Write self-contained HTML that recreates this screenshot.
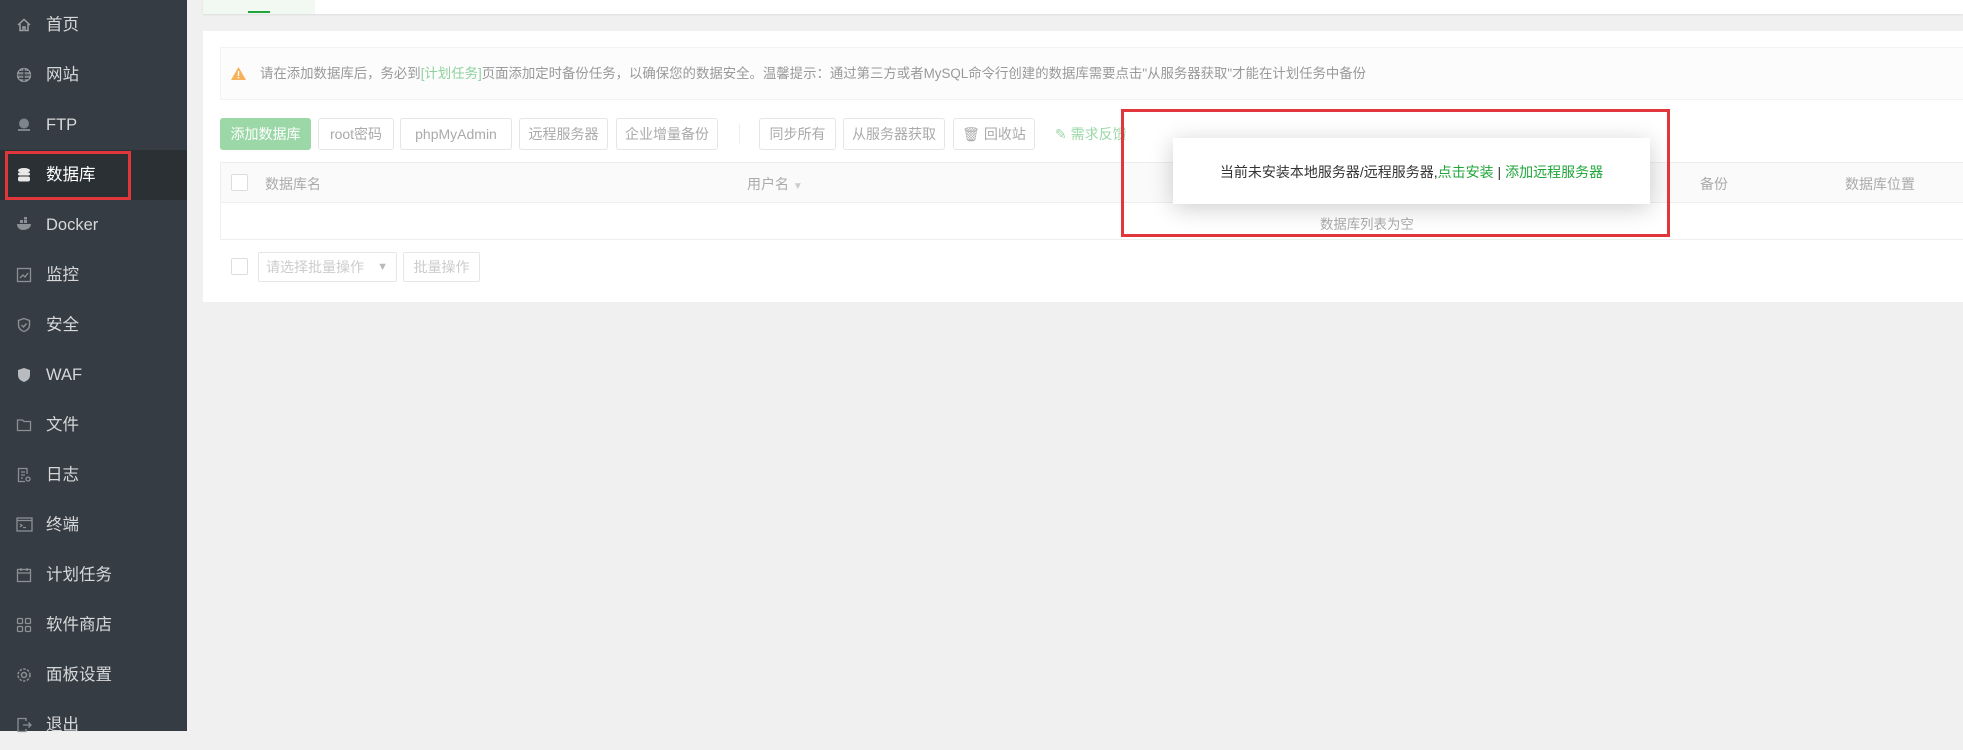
<!DOCTYPE html>
<html><head><meta charset="utf-8"><style>
*{margin:0;padding:0;box-sizing:border-box}
body{width:1963px;height:731px;overflow:hidden;background:#f0f0f0;font-family:"Liberation Sans","Noto Sans CJK SC",sans-serif;position:relative}
.side{position:absolute;left:0;top:0;width:187px;height:731px;background:#363c43}
.mi{position:absolute;left:0;width:187px;height:50px;color:#d6d8da;font-size:16.5px;line-height:50px}
.mi .t{position:absolute;left:46px}
.mi svg{position:absolute;left:16px;top:17px}
.act{background:#2b3035;color:#fff}
.abs{position:absolute}
.btn{position:absolute;top:118px;height:32px;border:1px solid #e6e6e6;border-radius:3px;background:#fff;color:#aaa;font-size:14px;line-height:30px;text-align:center}
</style></head><body>
<div class="side">
<div class="mi" style="top:0"><svg width="16" height="16" viewBox="0 0 16 16" fill="none" stroke="#9aa0a6" stroke-width="1.5"><path d="M2 8L8 2.5 14 8M4 7v6.5h3V10h2v3.5h3V7"/></svg><span class="t">首页</span></div>
<div class="mi" style="top:50px"><svg width="16" height="16" viewBox="0 0 16 16" fill="none" stroke="#9aa0a6" stroke-width="1.3"><circle cx="8" cy="8" r="6.5" fill="#7d848b"/><path d="M1.5 8h13M8 1.5v13M3 4.5h10M3 11.5h10" stroke="#363c43"/></svg><span class="t">网站</span></div>
<div class="mi" style="top:100px"><svg width="16" height="16" viewBox="0 0 16 16"><circle cx="8" cy="6.5" r="5" fill="#7d848b"/><rect x="2" y="12" width="12" height="2" fill="#7d848b"/></svg><span class="t">FTP</span></div>
<div class="mi act" style="top:150px"><svg width="16" height="16" viewBox="0 0 16 16"><ellipse cx="8" cy="3.5" rx="6" ry="2.5" fill="#e8e8e8"/><rect x="2" y="5.5" width="12" height="3" rx="1.5" fill="#e8e8e8"/><rect x="2" y="9.5" width="12" height="5" rx="2" fill="#e8e8e8"/></svg><span class="t">数据库</span></div>
<div class="mi" style="top:200px"><svg width="18" height="14" viewBox="0 0 18 14"><path d="M1 7h14c0 4-4 6-8 6S1 10 1 7z" fill="#8a9096"/><rect x="4" y="3" width="3" height="3" fill="#8a9096"/><rect x="8" y="3" width="3" height="3" fill="#8a9096"/><rect x="8" y="0" width="3" height="2.5" fill="#8a9096"/></svg><span class="t">Docker</span></div>
<div class="mi" style="top:250px"><svg width="16" height="16" viewBox="0 0 16 16" fill="none" stroke="#8a9096" stroke-width="1.3"><rect x="1.5" y="1.5" width="13" height="13"/><path d="M4 11l3-3 2 2 3-4"/></svg><span class="t">监控</span></div>
<div class="mi" style="top:300px"><svg width="16" height="16" viewBox="0 0 16 16" fill="none" stroke="#8a9096" stroke-width="1.4"><path d="M8 1.5l5.5 2v4.5c0 3.5-2.5 5.5-5.5 6.5C5 13.5 2.5 11.5 2.5 8V3.5z"/><path d="M5.5 8l2 2 3-3.5"/></svg><span class="t">安全</span></div>
<div class="mi" style="top:350px"><svg width="16" height="16" viewBox="0 0 16 16"><path d="M8 1l6 2v5c0 4-3 6-6 7-3-1-6-3-6-7V3z" fill="#b8bcc0"/></svg><span class="t">WAF</span></div>
<div class="mi" style="top:400px"><svg width="16" height="16" viewBox="0 0 16 16" fill="none" stroke="#8a9096" stroke-width="1.3"><path d="M1.5 3h5l1.5 1.5h6.5v9h-13z"/></svg><span class="t">文件</span></div>
<div class="mi" style="top:450px"><svg width="16" height="16" viewBox="0 0 16 16" fill="none" stroke="#8a9096" stroke-width="1.3"><path d="M11 7V1.5H2.5v13H9M5 5h4M5 8h4M5 11h2"/><circle cx="12" cy="12" r="2"/></svg><span class="t">日志</span></div>
<div class="mi" style="top:500px"><svg width="17" height="15" viewBox="0 0 17 15" fill="none" stroke="#8a9096" stroke-width="1.3"><rect x="1" y="1" width="15" height="13"/><path d="M1 3.5h15M4 7l2 1.5L4 10M7 10.5h3"/></svg><span class="t">终端</span></div>
<div class="mi" style="top:550px"><svg width="16" height="16" viewBox="0 0 16 16" fill="none" stroke="#8a9096" stroke-width="1.3"><rect x="1.5" y="2.5" width="13" height="12"/><path d="M1.5 6h13M5 1v3M11 1v3"/></svg><span class="t">计划任务</span></div>
<div class="mi" style="top:600px"><svg width="16" height="16" viewBox="0 0 16 16" fill="none" stroke="#8a9096" stroke-width="1.3"><rect x="1.5" y="1.5" width="5" height="5" rx="1"/><rect x="9.5" y="1.5" width="5" height="5" rx="1"/><rect x="1.5" y="9.5" width="5" height="5" rx="1"/><rect x="9.5" y="9.5" width="5" height="5" rx="1"/></svg><span class="t">软件商店</span></div>
<div class="mi" style="top:650px"><svg width="16" height="16" viewBox="0 0 16 16" fill="none" stroke="#8a9096" stroke-width="1.5"><circle cx="8" cy="8" r="2.5"/><circle cx="8" cy="8" r="6" stroke-dasharray="2.5 1.4"/></svg><span class="t">面板设置</span></div>
<div class="mi" style="top:700px"><svg width="16" height="16" viewBox="0 0 16 16" fill="none" stroke="#8a9096" stroke-width="1.3"><path d="M10 4V1.5H2v13h8V12M7 8h8M12.5 5.5L15 8l-2.5 2.5"/></svg><span class="t">退出</span></div>
<div class="abs" style="left:5px;top:151px;width:126px;height:49px;border:3px solid #e0363c"></div>
</div>

<div class="abs" style="left:203px;top:0;width:1760px;height:14px;background:#fff;box-shadow:0 1px 2px rgba(0,0,0,.08)"></div>
<div class="abs" style="left:203px;top:0;width:112px;height:14px;background:#f2f8f2"></div>
<div class="abs" style="left:248px;top:11px;width:22px;height:2px;background:#20a53a"></div>

<div class="abs" style="left:203px;top:31px;width:1760px;height:271px;background:#fff"></div>
<div class="abs" style="left:220px;top:47px;width:1743px;height:53px;background:#fcfcfc;border:1px solid #f3f3f3;border-right:0"></div>
<svg class="abs" style="left:231px;top:67px" width="15" height="13" viewBox="0 0 15 13"><path d="M7.5 0L15 13H0z" fill="#f6b15a"/><rect x="6.8" y="4" width="1.4" height="5" fill="#fff"/><rect x="6.8" y="10" width="1.4" height="1.4" fill="#fff"/></svg>
<div class="abs" style="left:260px;top:65px;font-size:13.4px;color:#999;white-space:nowrap;line-height:18px">请在添加数据库后，务必到<span style="color:#8fd19e">[计划任务]</span>页面添加定时备份任务，以确保您的数据安全。温馨提示：通过第三方或者MySQL命令行创建的数据库需要点击"从服务器获取"才能在计划任务中备份</div>

<div class="btn" style="left:220px;width:91px;background:#9bd7a7;border-color:#9bd7a7;color:#fff">添加数据库</div>
<div class="btn" style="left:318px;width:76px">root密码</div>
<div class="btn" style="left:400px;width:112px">phpMyAdmin</div>
<div class="btn" style="left:519px;width:89px">远程服务器</div>
<div class="btn" style="left:616px;width:102px">企业增量备份</div>
<div class="abs" style="left:739px;top:124px;width:1px;height:20px;background:#eee"></div>
<div class="btn" style="left:759px;width:77px">同步所有</div>
<div class="btn" style="left:843px;width:102px">从服务器获取</div>
<div class="btn" style="left:953px;width:82px">&#128465; 回收站</div>
<div class="abs" style="left:1055px;top:125px;font-size:14px;color:#9bd7a7;line-height:18px">&#9998; 需求反馈</div>

<div class="abs" style="left:220px;top:162px;width:1743px;height:78px;border:1px solid #eee;border-right:0"></div>
<div class="abs" style="left:221px;top:163px;width:1742px;height:40px;background:#fafafa;border-bottom:1px solid #eee"></div>
<div class="abs" style="left:231px;top:174px;width:17px;height:17px;border:1px solid #ddd;background:#fff;border-radius:2px"></div>
<div class="abs" style="left:265px;top:174px;font-size:14px;color:#aaa">数据库名</div>
<div class="abs" style="left:747px;top:174px;font-size:14px;color:#aaa">用户名 <span style="font-size:10px;color:#ccc">▼</span></div>
<div class="abs" style="left:1700px;top:174px;font-size:14px;color:#aaa">备份</div>
<div class="abs" style="left:1845px;top:174px;font-size:14px;color:#aaa">数据库位置</div>
<div class="abs" style="left:1320px;top:213px;font-size:13.4px;color:#aaa">数据库列表为空</div>

<div class="abs" style="left:231px;top:258px;width:17px;height:17px;border:1px solid #ddd;border-radius:2px"></div>
<div class="abs" style="left:258px;top:252px;width:139px;height:30px;border:1px solid #e6e6e6;border-radius:2px;font-size:14px;color:#ccc;line-height:28px;padding-left:7px">请选择批量操作<span style="position:absolute;right:8px;font-size:11px;color:#bbb">▼</span></div>
<div class="abs" style="left:403px;top:252px;width:77px;height:30px;border:1px solid #e6e6e6;border-radius:2px;font-size:14px;color:#ccc;line-height:28px;text-align:center">批量操作</div>

<div class="abs" style="left:1173px;top:138px;width:477px;height:66px;background:#fff;box-shadow:0 4px 24px rgba(0,0,0,.2)"></div>
<div class="abs" style="left:1173px;top:162px;width:477px;text-align:center;font-size:14px;color:#333;line-height:20px;white-space:nowrap">当前未安装本地服务器/远程服务器,<span style="color:#20a53a">点击安装</span> | <span style="color:#20a53a">添加远程服务器</span></div>
<div class="abs" style="left:1121px;top:109px;width:549px;height:128px;border:3px solid #e0363c"></div>
</body></html>
